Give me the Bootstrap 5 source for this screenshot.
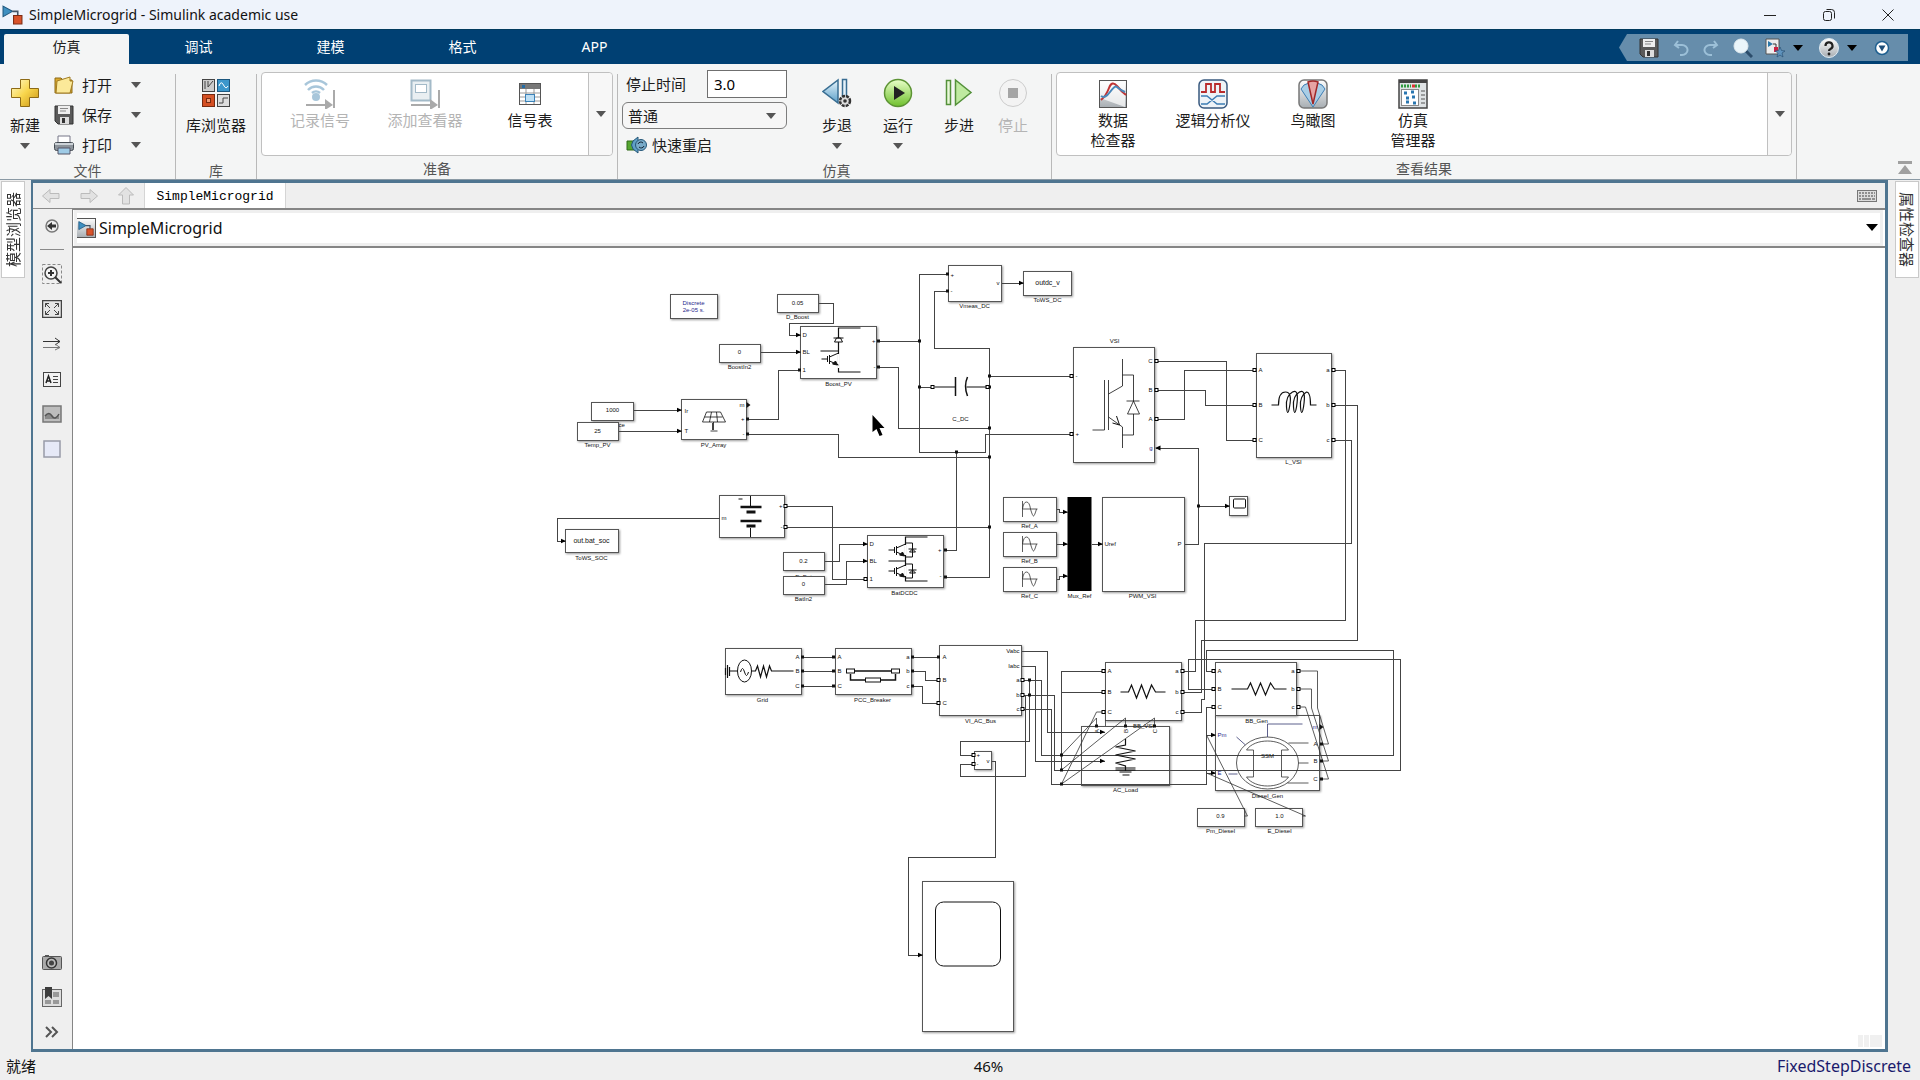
<!DOCTYPE html>
<html lang="zh-CN">
<head>
<meta charset="utf-8">
<meta name="viewport" content="width=device-width, initial-scale=1">
<title>SimpleMicrogrid - Simulink academic use</title>
<link href="https://cdn.jsdelivr.net/npm/bootstrap@5.3.0/dist/css/bootstrap.min.css" rel="stylesheet">
<style>
body{font-family:"Noto Sans","Noto Sans CJK SC",sans-serif;font-size:15px;line-height:20px;color:#1c1c1c;background:#efefef;overflow:hidden}
button{font:inherit;color:inherit;background:none;border:0;padding:0}
svg{display:block;flex-shrink:0}
.titlebar{height:29px;background:#eef3fb;padding:0 25px 0 2px;gap:6px}
.titlebar h1{font-size:14px;line-height:20px;margin:0;font-weight:400;color:#111}
.win-btns{gap:45px}
.tabbar{height:35px;background:#004073;padding:4px 12px 0 4px;border-top:1px solid #013a5e}
.rtabs{gap:7px}
.rtab{width:125px;height:30px;font-size:14px;color:#fff;padding-bottom:4px}
.rtab.active{background:#f4f5f5;color:#222;border-radius:2px 2px 0 0}
.quick{height:27px;background:#668dab;padding:0 17px 0 20px;clip-path:polygon(8px 0,100% 0,100% 100%,8px 100%,0 50%)}
.quick-main{gap:14px}
.ribbon{height:116px;background:#f4f5f5;border-bottom:1px solid #8b9aa5}
.group{margin-top:10px;border-right:1px solid #b9b9b9;height:105px}
.group-body{height:89px}
.group-name{font-size:14px;line-height:16px;color:#555;text-align:center}
.g-file{width:176px}.g-lib{width:81px}.g-prep{width:361px}.g-sim{width:434px}.g-res{width:745px}
.big{padding-top:4px;display:flex;flex-direction:column;align-items:center}
.big .pic{height:32px;margin-bottom:5px;display:flex;align-items:flex-start}
.caret{display:block;width:0;height:0;border:5px solid transparent;border-top:6px solid #555;border-bottom:0}
.caret-k{border-top-color:#000}
.caret-lg{border-width:7px 6px 0}
.rows3{margin:-4px 0 0 13px}
.row3{height:30px;gap:7px;display:flex;align-items:center}
.row3 .more{margin-left:12px}
.new-btn{margin-left:10px}
.gallery{background:#fff;border:1px solid #c0c0c0;border-radius:4px;height:84px;margin-top:-2px}
.gallery .item{display:flex;flex-direction:column;align-items:center;padding-top:5px;white-space:nowrap;width:105px}
.gallery .item .pic{height:32px;display:flex;align-items:center}
.gallery .res{padding-left:6px}
.gallery .res .item{width:100px}
.gal-more{width:24px;border-left:1px solid #c0c0c0;background:#f7f7f7;border-radius:0 4px 4px 0}
.dim{color:#b4b4b4}
.sim-col{width:165px}
.sim-first{margin-top:-4px}
.sim-in{width:80px;height:28px;border:1px solid #6f6f6f;padding:0 6px;font-size:15px;border-radius:0}
.sim-sel{height:27px;border:1px solid #7d7d7d;border-radius:6px;padding:0 28px 0 5px;font-size:15px;line-height:20px;color:#1c1c1c;background-color:#f6f6f6;background-size:10px 6px;background-position:right 10px center;background-image:url("data:image/svg+xml,%3csvg xmlns='http://www.w3.org/2000/svg' viewBox='0 0 10 6'%3e%3cpath d='M0 0h10L5 6z' fill='%23555'/%3e%3c/svg%3e")}
.restart{margin-top:6px}
.run-btns{margin-left:35px;gap:31px}
.main-row{min-height:0}
.rail{width:31px;padding:1px 0 0 1px}
.rail-r{width:32px;padding-left:7px}
.vtab{width:24px;height:97px;background:#fff;border:1px solid #c9c9c9;writing-mode:vertical-rl;text-orientation:sideways;display:flex;align-items:center;justify-content:center;color:#333}
.vtab-l{transform:rotate(180deg)}
.frame{border:3px solid #4f7590;border-left-width:2px}
.doc-tabs{height:25px;background:#efefef;padding:0 8px}
.doc-nav{width:103px;gap:18px}
.doc-tab{font-family:"Liberation Mono","Noto Sans CJK SC",monospace;font-size:13px;width:142px;height:25px;background:#fff;color:#000;border-left:1px solid #d5d5d5;border-right:1px solid #d5d5d5;padding-top:2px}
.palette{width:39px;background:#efefef;border-top:1px solid #8a8a8a;padding:7px 2px 7px 0}
.palette button{height:20px;width:22px;display:flex;align-items:center;justify-content:center}
.palette hr{width:24px;margin:13px 0 14px;border-color:#8a8a8a;opacity:1}
.palette .stack{gap:15px}
.address{height:40px;background:#fff;border:solid #858585;border-width:2px 0 2px 1px;outline:3px solid #efefef;outline-offset:-5px;padding:0 7px 1px 3px;gap:3px}
.address span{font-size:16px;color:#111}
.stage{border-left:1px solid #858585;background:#fff;position:relative}
.grip{position:absolute;right:3px;bottom:2px;width:24px;height:12px;background:linear-gradient(90deg,#f0f0f0 5px,#fff 5px 6px,#f0f0f0 6px 11px,#fff 11px 12px,#f0f0f0 12px)}
.statusbar{height:28px;padding:0 9px 0 6px;color:#111}
.statusbar .zoom{padding-left:60px}
.statusbar a{color:#1a1a6c;text-decoration:none;font-size:16px}
.dia{font-family:"Liberation Sans",Arial,sans-serif;font-size:6px;fill:#111}
.dia .w{fill:none;stroke:#444;stroke-width:1;shape-rendering:crispEdges}
.dia .d{fill:none;stroke:#333;stroke-width:.8}
.dia .b{fill:#fff;stroke:#555;stroke-width:1;shape-rendering:crispEdges;filter:drop-shadow(1px 1px 1px rgba(0,0,0,.4))}
.dia .i{fill:none;stroke:#111;stroke-width:1}
.dia .n{fill:none;stroke:#33376f;stroke-width:.8}
.dia .m{text-anchor:middle}
.dia .e{text-anchor:end}
.dia .v{font-size:7px}
.dia .u{fill:#27278a}
</style>
<script defer src="https://cdn.jsdelivr.net/npm/bootstrap@5.3.0/dist/js/bootstrap.bundle.min.js"></script>
</head>
<body class="d-flex flex-column vh-100">
<svg width="0" height="0" class="position-absolute" aria-hidden="true">
<defs>
<linearGradient id="gold" x2="1" y2="1"><stop stop-color="#fffbd0"/><stop offset=".5" stop-color="#f8d64c"/><stop offset="1" stop-color="#c99212"/></linearGradient>
<linearGradient id="steel" x2="0" y2="1"><stop stop-color="#fdfdfd"/><stop offset="1" stop-color="#a7adb2"/></linearGradient>
<linearGradient id="blue" x2="0" y2="1"><stop stop-color="#e6f4fb"/><stop offset="1" stop-color="#5b9fc9"/></linearGradient>
<linearGradient id="green" x2="0" y2="1"><stop stop-color="#e9ffc9"/><stop offset="1" stop-color="#6ec02c"/></linearGradient>
<symbol id="floppy" viewBox="0 0 20 20"><path d="M1 1h18v18H4l-3-3z" fill="#5a5a5a" stroke="#333"/><path d="M4 1h12v8H4z" fill="#eee"/><path d="M6 3.500h8M6 6h6" stroke="#888"/><path d="M6 12h9v7H6z" fill="#ddd"/><path d="M8 13h3v5H8z" fill="#333"/></symbol>
<symbol id="simlogo" viewBox="0 0 20 20"><path d="M1 2l9 5-9 5z" fill="#3e8fc0" stroke="#1d567d"/><path d="M10 7h5v4" fill="none" stroke="#456" stroke-width="1.500"/><path d="M11 11h8v8h-8z" fill="#d9532a" stroke="#7d2a12"/></symbol>
</defs></svg>

<header class="titlebar d-flex align-items-center">
<svg width="21" height="21" viewBox="0 0 20 20"><use href="#simlogo"/></svg>
<h1>SimpleMicrogrid - Simulink academic use</h1>
<div class="win-btns d-flex ms-auto">
<button type="button" aria-label="Minimize"><svg width="14" height="14"><path d="M1 7.500h12" stroke="#222"/></svg></button>
<button type="button" aria-label="Restore"><svg width="14" height="14" fill="none" stroke="#222"><rect x="1.500" y="3.500" width="8" height="9" rx="2"/><path d="M4.500 1.500h5a3 3 0 0 1 3 3v6"/></svg></button>
<button type="button" aria-label="Close"><svg width="14" height="14"><path d="M1.500 1.500l11 11M12.500 1.500l-11 11" stroke="#222"/></svg></button>
</div>
</header>

<nav class="tabbar d-flex">
<div class="rtabs d-flex">
<button type="button" class="rtab active">仿真</button><button type="button" class="rtab">调试</button><button type="button" class="rtab">建模</button><button type="button" class="rtab">格式</button><button type="button" class="rtab">APP</button>
</div>
<div class="quick d-flex align-items-center ms-auto">
<div class="quick-main d-flex align-items-center">
<button type="button" aria-label="保存"><svg width="20" height="20"><use href="#floppy"/></svg></button>
<button type="button" aria-label="撤销" disabled><svg width="16" height="18" fill="none" stroke="#9cc0d8" stroke-width="2"><path d="M5 2L2 6l4 3M2 6h7a5 4.500 0 0 1 0 10H7"/></svg></button>
<button type="button" aria-label="重做" disabled><svg width="16" height="18" fill="none" stroke="#9cc0d8" stroke-width="2"><path d="M11 2l3 4-4 3M14 6H7a5 4.500 0 0 0 0 10h2"/></svg></button>
<button type="button" aria-label="查找"><svg width="20" height="20"><path d="M12 12l7 7" stroke="#2c4d6b" stroke-width="3"/><circle cx="8" cy="8" r="7" fill="#eaf5fa" stroke="#dfe9ee"/></svg></button>
</div>
<button type="button" class="ms-2 ps-1 d-flex align-items-center" aria-label="收藏"><svg width="20" height="20"><path d="M1 1h13v15H1z" fill="#eee" stroke="#555"/><path d="M3 3l5 3-5 3z" fill="#2c78a8"/><path d="M8 6h3v3" fill="none" stroke="#333"/><path d="M9 9h4v5H9z" fill="#c24"/><path d="M15 9l1.500 3.500 3.500.5-3 2 1 4-3-2-3 2 1-4-3-2 3.500-.5z" fill="#5f93bd" stroke="#24496b" stroke-width=".6"/></svg><span class="caret caret-k ms-2"></span></button>
<button type="button" class="ms-3 d-flex align-items-center" aria-label="帮助"><svg width="20" height="20"><circle cx="10" cy="10" r="9.500" fill="url(#steel)" stroke="#dfeaf2"/><path d="M6.500 8a3.500 3.500 0 1 1 5 3q-1.500.7-1.500 2" fill="none" stroke="#222" stroke-width="2.200"/><circle cx="10" cy="16" r="1.400" fill="#222"/></svg><span class="caret caret-k ms-2"></span></button>
<button type="button" class="ms-3" aria-label="自定义"><svg width="18" height="18"><circle cx="9" cy="9" r="6.500" fill="#fff" stroke="#1f5f8f" stroke-width="1.500"/><path d="M5.500 6.500h7L9 12.500z" fill="#1f4e78"/></svg></button>
</div>
</nav>

<section class="ribbon d-flex">
<div class="group g-file">
<div class="group-body d-flex">
<button type="button" class="big new-btn"><span class="pic"><svg width="30" height="30"><path d="M10.500 1.500h9v9h9v9h-9v9h-9v-9h-9v-9h9z" fill="url(#gold)" stroke="#8d6a16"/></svg></span>新建<span class="caret mt-2"></span></button>
<div class="rows3">
<div class="row3"><svg width="22" height="20"><path d="M2 3h6l2 2h9v13H2z" fill="#dba92d" stroke="#8d6a16"/><path d="M4 6l13-4v4h3l-3 12H3z" fill="#fbe999" stroke="#a27c22"/></svg><button type="button">打开</button><button type="button" class="more" aria-label="打开选项"><span class="caret"></span></button></div>
<div class="row3"><svg width="22" height="20"><use href="#floppy"/></svg><button type="button">保存</button><button type="button" class="more" aria-label="保存选项"><span class="caret"></span></button></div>
<div class="row3"><svg width="22" height="20"><path d="M5 1h12v8H5z" fill="#fff" stroke="#778"/><rect x="1.500" y="7.500" width="19" height="8" rx="2" fill="#8d949b" stroke="#444b52"/><path d="M2 9h18" stroke="#cdd3d8" stroke-width="2"/><path d="M5 13h12v6H5z" fill="#9fcbe6" stroke="#556"/></svg><button type="button">打印</button><button type="button" class="more" aria-label="打印选项"><span class="caret"></span></button></div>
</div>
</div>
<div class="group-name">文件</div>
</div>
<div class="group g-lib">
<div class="group-body d-flex justify-content-center">
<button type="button" class="big"><span class="pic"><svg width="30" height="30"><rect x="1.500" y="1.500" width="12" height="12" fill="#ccc" stroke="#444"/><path d="M4 3v8M7 3v6l5-6" stroke="#444" fill="none"/><rect x="16.500" y="1.500" width="12" height="12" fill="#3c97cc" stroke="#1b567e"/><path d="M18 8q2-6 4.500-1t4.500 1" stroke="#fff" fill="none"/><rect x="1.500" y="16.500" width="12" height="12" fill="#d44f22" stroke="#772a10"/><rect x="5.500" y="20.500" width="4" height="4" fill="#f29a75" stroke="#772a10"/><rect x="16.500" y="16.500" width="12" height="12" fill="#ddd" stroke="#444"/><path d="M18 25h4v-5h5" stroke="#444" fill="none"/></svg></span>库浏览器</button>
</div>
<div class="group-name">库</div>
</div>
<div class="group g-prep px-1">
<div class="group-body">
<div class="gallery d-flex">
<div class="d-flex flex-grow-1 justify-content-center">
<button type="button" class="item dim" disabled><span class="pic"><svg width="32" height="30" fill="none"><circle cx="12" cy="18" r="4" fill="#a8c6da"/><path d="M4 11a11 11 0 0 1 16 0M1 6a16 16 0 0 1 22 0M8 14a6 6 0 0 1 8 0" stroke="#a8c6da" stroke-width="2.500"/><path d="M2 26h20M30 11v18" stroke="#aaa" stroke-width="2"/><path d="M21 20l8 6-8 5z" fill="#aaa"/></svg></span>记录信号</button>
<button type="button" class="item dim" disabled><span class="pic"><svg width="32" height="30" fill="none"><rect x="2.500" y="1.500" width="19" height="20" fill="#e9eff2" stroke="#a3bac8" stroke-width="2"/><rect x="6.500" y="5.500" width="11" height="8" fill="#fff" stroke="#a3bac8"/><path d="M2 26h20M30 11v18" stroke="#aaa" stroke-width="2"/><path d="M21 20l8 6-8 5z" fill="#aaa"/></svg></span>添加查看器</button>
<button type="button" class="item"><span class="pic"><svg width="22" height="24"><rect x=".5" y="1.500" width="21" height="21" fill="#fff" stroke="#555"/><path d="M1 2h20v5H1z" fill="#777"/><path d="M3 3h3v3H3z" fill="#236ca5"/><path d="M1 11h20M1 15h20M1 19h20M7 7v15M15 7v15" stroke="#999"/><rect x="6.500" y="12.500" width="9" height="7" fill="#bfe0f5" stroke="#3b82b8"/></svg></span>信号表</button>
</div>
<button type="button" class="gal-more d-flex align-items-center justify-content-center" aria-label="更多"><span class="caret"></span></button>
</div>
</div>
<div class="group-name">准备</div>
</div>
<div class="group g-sim ps-1">
<div class="group-body d-flex">
<div class="sim-col">
<div class="sim-first d-flex justify-content-between align-items-center"><label for="stop" class="ps-1">停止时间</label><input id="stop" class="sim-in" value="3.0"></div>
<select class="form-select sim-sel mt-1" aria-label="仿真模式"><option>普通</option></select>
<button type="button" class="restart d-flex align-items-center ps-1 w-100"><svg width="22" height="18" class="me-1"><path d="M1 5h8v9H1z" fill="#55a630" stroke="#2e6b18"/><path d="M12 1v3a6 6 0 0 1 0 10v3l-5-4q-3-4 0-8z" fill="#5f9fc6" stroke="#245678"/><circle cx="15" cy="9" r="5.500" fill="#78abc9" stroke="#245678"/><path d="M12 8a3 3 0 0 1 5-1M18 10a3 3 0 0 1-5 1" stroke="#123" fill="none"/></svg>快速重启</button>
</div>
<div class="run-btns d-flex">
<button type="button" class="big"><span class="pic"><svg width="30" height="30"><path d="M16 2v23L1 13.500z" fill="url(#blue)" stroke="#386d92" stroke-width="1.500"/><path d="M20.500 1.500h4v23h-4z" fill="#e5f2fa" stroke="#386d92" stroke-width="1.500"/><circle cx="23" cy="23" r="5" fill="#ddd" stroke="#333" stroke-width="2.500" stroke-dasharray="3 1"/><circle cx="23" cy="23" r="1.800" fill="#333"/></svg></span>步退<span class="caret mt-2"></span></button>
<button type="button" class="big"><span class="pic"><svg width="30" height="30"><circle cx="15" cy="15" r="13.500" fill="url(#green)" stroke="#5c9334" stroke-width="1.500"/><path d="M11 8l11 7-11 7z" fill="#222"/></svg></span>运行<span class="caret mt-2"></span></button>
<button type="button" class="big"><span class="pic"><svg width="28" height="30"><path d="M1.500 2.500h4v24h-4z" fill="#e8f8d9" stroke="#54913a" stroke-width="1.500"/><path d="M10.500 2v25L26 14.500z" fill="#bfeaa0" stroke="#54913a" stroke-width="1.500"/></svg></span>步进</button>
</div>
<button type="button" class="big dim ms-4" disabled><span class="pic"><svg width="30" height="30"><circle cx="15" cy="15" r="13.500" fill="#f3f3f3" stroke="#ccc"/><path d="M10 10h10v10H10z" fill="#a5a5a5"/></svg></span>停止</button>
</div>
<div class="group-name">仿真</div>
</div>
<div class="group g-res px-1">
<div class="group-body">
<div class="gallery d-flex">
<div class="res d-flex flex-grow-1">
<button type="button" class="item"><span class="pic"><svg width="28" height="28"><rect x=".5" y=".5" width="27" height="27" fill="url(#steel)" stroke="#555"/><path d="M1 2v16l25 9V1z" fill="#fff" opacity=".7"/><path d="M2 20q5-4 8-12t8-2 9 9" fill="none" stroke="#c13434" stroke-width="2"/><path d="M2 16q4 3 9-4t7-5 8 5" fill="none" stroke="#4a87b9" stroke-width="2"/></svg></span><span>数据<br>检查器</span></button>
<button type="button" class="item"><span class="pic"><svg width="30" height="30"><rect x="1" y="1" width="28" height="28" rx="5" fill="#eef3f7" stroke="#38597f" stroke-width="1.500"/><path d="M3 13h5V5h5v8h4V5h5v8h5" fill="none" stroke="#b92b2b" stroke-width="1.800"/><path d="M3 17h6l10 8h8M3 25h6l10-8h8" fill="none" stroke="#3d7db4" stroke-width="1.500"/></svg></span>逻辑分析仪</button>
<button type="button" class="item"><span class="pic"><svg width="30" height="30"><rect x="1" y="1" width="28" height="28" rx="5" fill="url(#steel)" stroke="#777" stroke-width="1.500"/><path d="M15 28L3 10q2-5 8-6h8q6 1 8 6z" fill="#a9cee6" stroke="#3d7db4"/><path d="M15 25L10 3q5-2 10 0z" fill="#e6a3a3" stroke="#a02828" stroke-width="1.500"/></svg></span>鸟瞰图</button>
<button type="button" class="item"><span class="pic"><svg width="30" height="30"><rect x="1" y="1" width="28" height="28" fill="#dfe3e5" stroke="#444" stroke-width="1.500"/><path d="M1 1h28v3H1z" fill="#444"/><path d="M3 7h10m4 0h6" stroke="#2f9a3f" stroke-width="3" stroke-dasharray="2 1"/><path d="M14 7h3" stroke="#d33" stroke-width="3"/><rect x="3.500" y="10.500" width="17" height="16" fill="#fff" stroke="#888"/><path d="M6 14h3m4-1h3m-8 6h3m3-1h3m-9 5h3m4 1h3" stroke="#2a77b0" stroke-width="3"/><path d="M23 12h4m-4 4h4m-4 4h4m-4 4h4" stroke="#555"/></svg></span><span>仿真<br>管理器</span></button>
</div>
<button type="button" class="gal-more d-flex align-items-center justify-content-center" aria-label="更多"><span class="caret"></span></button>
</div>
</div>
<div class="group-name">查看结果</div>
</div>
<button type="button" class="ms-auto align-self-end me-2 mb-1" aria-label="折叠工具条"><svg width="14" height="14" fill="#a0a0a0"><path d="M0 0h14v3H0zM7 4l7 9H0z"/></svg></button>
</section>

<main class="main-row d-flex flex-grow-1">
<aside class="rail"><button type="button" class="vtab vtab-l">模型浏览器</button></aside>
<div class="frame d-flex flex-column flex-grow-1">
<div class="doc-tabs d-flex align-items-center">
<div class="doc-nav d-flex">
<svg width="20" height="20" fill="#e2e2e2" stroke="#bbb"><path d="M1.500 10L9 3.500v4h9v5H9v4z"/></svg>
<svg width="20" height="20" fill="#e2e2e2" stroke="#bbb"><path d="M18.500 10L11 3.500v4H2v5h9v4z"/></svg>
<svg width="18" height="20" fill="#e2e2e2" stroke="#bbb"><path d="M9 1.500L1.500 9h4v9h7V9h4z"/></svg>
</div>
<button type="button" class="doc-tab">SimpleMicrogrid</button>
<svg width="20" height="12" class="ms-auto"><rect x=".5" y=".5" width="19" height="11" fill="#ddd" stroke="#777"/><path d="M2 3h16M2 6h16" stroke="#777" stroke-width="1.500" stroke-dasharray="2 1"/><path d="M2 9h2m1 0h9m1 0h3" stroke="#777" stroke-width="1.500"/></svg>
</div>
<div class="main-row d-flex flex-grow-1">
<div class="palette d-flex flex-column align-items-center">
<button type="button" aria-label="隐藏浏览器"><svg width="16" height="16"><circle cx="8" cy="8" r="6" fill="#eee" stroke="#777" stroke-width="1.500"/><path d="M3 8l5-4v2.500h4v3H8V12z" fill="#333"/></svg></button>
<hr>
<div class="stack d-flex flex-column">
<button type="button" aria-label="缩放"><svg width="20" height="20" fill="none"><rect x=".5" y=".5" width="19" height="19" stroke="#888" stroke-dasharray="3 2"/><circle cx="9" cy="9" r="6" fill="#f6f6f6" stroke="#444" stroke-width="1.500"/><path d="M6 9h6M9 6v6M13 13l6 6" stroke="#333" stroke-width="2"/></svg></button>
<button type="button" aria-label="适应视图"><svg width="20" height="18" fill="none" stroke="#444"><rect x=".5" y=".5" width="19" height="17" fill="#e6e6e6" stroke-width="1.500"/><path d="M3.500 7V3.500H7M3.500 3.500L8 8M13 3.500h3.500V7M16.500 3.500L12 8M3.500 11v3.500H7M3.500 14.500L8 10M13 14.500h3.500V11M16.500 14.500L12 10"/></svg></button>
<button type="button" aria-label="采样时间"><svg width="20" height="14" fill="none"><path d="M1 4.500h17M13 1l5 3.500L13 8" stroke="#333"/><path d="M1 10.500h17M13 7l5 3.500L13 13" stroke="#777"/></svg></button>
<button type="button" aria-label="注释"><svg width="18" height="15"><rect x=".5" y=".5" width="17" height="14" fill="#f2f2f2" stroke="#444"/><path d="M3 11l2.500-7L8 11M4 9h3" fill="none" stroke="#222" stroke-width="1.500"/><path d="M10 4.500h5M10 7.500h5M10 10.500h5" stroke="#444"/></svg></button>
<button type="button" aria-label="图像"><svg width="20" height="18"><rect x="1" y="1" width="18" height="16" fill="#bdbdbd" stroke="#777" stroke-width="1.500"/><path d="M3 14v-3q4-5 7 0t7-2v5z" fill="#8a8a8a"/><path d="M3 11q4-5 7 0t7-2" fill="none" stroke="#555" stroke-width="1.500"/></svg></button>
<button type="button" aria-label="区域"><svg width="18" height="18"><rect x="1" y="1" width="16" height="16" fill="#e6e9f7" stroke="#989ba8" stroke-width="1.500"/></svg></button>
</div>
<div class="stack d-flex flex-column mt-auto">
<button type="button" aria-label="截图"><svg width="20" height="16"><rect x=".5" y="2.500" width="19" height="13" rx="1" fill="#aaa" stroke="#555"/><path d="M3 1h4v2H3z" fill="#555"/><circle cx="9.500" cy="9" r="5" fill="#bbb" stroke="#333" stroke-width="1.500"/><circle cx="9.500" cy="9" r="2.500" fill="#444"/></svg></button>
<button type="button" aria-label="书签"><svg width="20" height="20"><rect x=".5" y="2.500" width="19" height="17" fill="#ddd" stroke="#666"/><path d="M11 5h6v5h-6zM3 13h6v4H3zM11 13h6v4h-6z" fill="#999"/><path d="M3 0h7v12L6.500 9 3 12z" fill="#3c3c3c"/></svg></button>
<button type="button" aria-label="更多"><svg width="14" height="14" fill="none" stroke="#555" stroke-width="2"><path d="M1 2l5 5-5 5M7 2l5 5-5 5"/></svg></button>
</div>
</div>
<div class="d-flex flex-column flex-grow-1">
<div class="address d-flex align-items-center">
<svg width="20" height="20"><rect x=".5" y=".5" width="19" height="19" fill="url(#steel)" stroke="#555"/><svg x="2" y="2" width="16" height="16" viewBox="0 0 20 20"><use href="#simlogo"/></svg></svg>
<span>SimpleMicrogrid</span>
<button type="button" class="ms-auto" aria-label="路径"><span class="caret caret-k caret-lg"></span></button>
</div>
<div class="stage flex-grow-1">
<svg class="dia position-absolute w-100 h-100" viewBox="73 248 1811 801">
<defs>
<marker id="ah" markerUnits="userSpaceOnUse" markerWidth="6" markerHeight="6" refX="5" refY="3" orient="auto"><path d="M0 .5L5.500 3 0 5.500z" fill="#000"/></marker>
<g id="dot"><rect x="-1.500" y="-1.500" width="3" height="3"/></g>
<g id="port"><rect x="-1.500" y="-1.500" width="3" height="3" fill="#fff" stroke="#000"/></g>
<g id="sine"><path d="M-5-8V8M-5 0Q-4-7-1-7T3 0Q5 7 6 7T9 0M-5 0H10" fill="none" stroke="#333" stroke-width=".8"/></g>
<g id="igbt" fill="none" stroke="#111"><path d="M-17 0h6M-11-3v6M-9-4v9M-9-2L0-6M-9 2L0 6"/><path d="M-1 6l-5-1 3-3z" fill="#111"/></g>
</defs>
<g>
<rect class="b" x="670" y="294" width="47" height="24"/><rect class="b" x="777" y="294" width="41" height="18"/><rect class="b" x="719" y="344" width="41" height="18"/><rect class="b" x="800" y="326" width="76" height="52"/><rect class="b" x="681" y="399" width="65" height="40"/><rect class="b" x="591" y="402" width="42" height="18"/>
<text x="618" y="427">ce</text><rect class="b" x="577" y="422" width="41" height="18"/>
<rect class="b" x="948" y="265" width="53" height="36"/><rect class="b" x="1023" y="271" width="48" height="24"/><rect class="b" x="1073" y="347" width="81" height="115"/><rect class="b" x="1256" y="353" width="75" height="104"/>
<rect class="b" x="719" y="495" width="65" height="42"/><rect class="b" x="565" y="529" width="53" height="23"/><rect class="b" x="783" y="552" width="41" height="18"/><text class="m" x="803" y="579">D_Bat</text><rect class="b" x="783" y="576" width="41" height="18"/><rect class="b" x="867" y="535" width="76" height="52"/>
<rect class="b" x="725" y="648" width="76" height="46"/><rect class="b" x="835" y="648" width="76" height="46"/><rect class="b" x="939" y="645" width="82" height="70"/>
<rect class="b" x="1003" y="497" width="53" height="24"/><rect class="b" x="1003" y="532" width="53" height="24"/><rect class="b" x="1003" y="567" width="53" height="24"/><rect x="1067" y="497" width="24" height="94" fill="#000"/><rect class="b" x="1102" y="497" width="82" height="94"/><rect class="b" x="1229" y="496" width="18" height="19"/>
<rect class="b" x="1081" y="726" width="88" height="59"/><rect class="b" x="1105" y="662" width="76" height="58"/><rect class="b" x="1215" y="715" width="104" height="75"/><rect class="b" x="1215" y="662" width="81" height="53"/>
<rect class="b" x="1197" y="808" width="47" height="18"/><rect class="b" x="1255" y="808" width="47" height="18"/><rect class="b" x="974" y="751" width="17" height="18"/><rect class="b" x="922" y="881" width="91" height="150"/>
</g>
<g class="w">
<g marker-end="url(#ah)"><path d="M818 303H833V323H789V335H800"/><path d="M760 352H800"/><path d="M633 410H681"/><path d="M618 431H681"/><path d="M1001 283H1023"/><path d="M1197 506H1229"/><path d="M1198 448H1155"/><path d="M719 518H557V541H565"/><path d="M824 561H839V544H867"/><path d="M824 584H846V561H867"/><path d="M1056 509H1059V512H1067"/><path d="M1056 544H1067"/><path d="M1056 579H1059V576H1067"/><path d="M1091 544H1102"/><path d="M1021 651H1047V732H1104"/><path d="M1021 666H1035V761H1104"/><path d="M991 761H995V857H908V955H922"/><path d="M1206 735H1215"/><path d="M1206 773H1215"/></g>
<path d="M747 419H778V370H799M747 434H838V457H989M877 341H919M947 274H919V452H985V434H1072M956 452V550H944M877 367H898V428H989M919 387H932M947 291H934V348H989V577H944M989 376H1072M1156 361H1226V440H1254M1156 390H1205V405H1254M1156 419H1184V370H1254M1198 448V544H1184M1333 370H1345V620H1195V671H1182M1333 405H1357V640H1201V692H1182M1333 440H1351V543H1204V699H1201V712H1182M785 506H832V579H865M785 527H989M801 657H835M801 671H835M801 686H835M911 657H939M911 671H925V680H939M911 686H922V703H939"/>
<path d="M1213 671H1206V650H1393V755H1041V680H1022M1213 689H1188V659H1400V770H1054V695H1022M1213 707H1206V784H1051V709H1022M1029 680V741H960V755H973M1025 695V776H960V764H973M1103 671H1061V770M1103 692H1061"/>
</g>
<g class="d"><path d="M1103 712h-7L1061 784M1061 755l35-37v8M1061 770l64-52v8M1061 784l93-66v8M1298 671h19v37l11 36h-7M1298 689h13v19l17 53h-7M1298 707h7l23 72h-7M1206 735l41 81h-3M1206 773l99 43h-3M1105 720v6"/></g>
<g><use href="#dot" x="919" y="341"/><use href="#dot" x="919" y="387"/><use href="#dot" x="956" y="452"/><use href="#dot" x="989" y="376"/><use href="#dot" x="989" y="387"/><use href="#dot" x="989" y="428"/><use href="#dot" x="989" y="457"/><use href="#dot" x="989" y="527"/><use href="#dot" x="1198" y="506"/><use href="#dot" x="1029" y="680"/><use href="#dot" x="1029" y="695"/><use href="#dot" x="1061" y="755"/><use href="#dot" x="1061" y="770"/><use href="#dot" x="1061" y="784"/>
<use href="#dot" x="878" y="341"/><use href="#dot" x="878" y="367"/><use href="#dot" x="799" y="370"/><use href="#dot" x="747" y="419"/><use href="#dot" x="747" y="434"/><use href="#dot" x="947" y="274"/><use href="#dot" x="947" y="291"/><use href="#dot" x="945" y="550"/><use href="#dot" x="945" y="577"/><path d="M746 402l4 3-4 3zM1319 724l4 3-4 3z"/></g>
<g><use href="#port" x="932" y="387"/><use href="#port" x="987" y="387"/><use href="#port" x="1071" y="376"/><use href="#port" x="1071" y="434"/><use href="#port" x="1156" y="361"/><use href="#port" x="1156" y="390"/><use href="#port" x="1156" y="419"/><use href="#port" x="1254" y="370"/><use href="#port" x="1254" y="405"/><use href="#port" x="1254" y="440"/><use href="#port" x="1333" y="370"/><use href="#port" x="1333" y="405"/><use href="#port" x="1333" y="440"/><use href="#port" x="785" y="506"/><use href="#port" x="785" y="527"/><use href="#port" x="865" y="579"/>
<use href="#dot" x="802" y="657"/><use href="#dot" x="802" y="671"/><use href="#dot" x="802" y="686"/><use href="#dot" x="833" y="657"/><use href="#dot" x="833" y="671"/><use href="#dot" x="833" y="686"/><use href="#dot" x="912" y="657"/><use href="#dot" x="912" y="671"/><use href="#dot" x="912" y="686"/><use href="#dot" x="938" y="657"/><use href="#port" x="938" y="680"/><use href="#port" x="938" y="703"/><use href="#port" x="1022" y="680"/><use href="#port" x="1022" y="695"/><use href="#port" x="1022" y="709"/>
<use href="#port" x="1103" y="671"/><use href="#port" x="1103" y="692"/><use href="#port" x="1103" y="712"/><use href="#port" x="1182" y="671"/><use href="#port" x="1182" y="692"/><use href="#port" x="1182" y="712"/><use href="#port" x="1213" y="671"/><use href="#port" x="1213" y="689"/><use href="#port" x="1213" y="707"/><use href="#port" x="1298" y="671"/><use href="#port" x="1298" y="689"/><use href="#port" x="1298" y="707"/><use href="#port" x="973" y="755"/><use href="#port" x="973" y="764"/><use href="#dot" x="1096" y="726"/><use href="#dot" x="1125" y="726"/><use href="#dot" x="1154" y="726"/><use href="#dot" x="1321" y="744"/><use href="#dot" x="1321" y="761"/><use href="#dot" x="1321" y="779"/></g>
<g class="i">
<path d="M860 328h-22v44h22M820 351h18" stroke-width="1.200"/><path d="M834 342h8l-2-4h-4zM833 338h10" fill="#fff"/>
<path d="M838 354v14" stroke="#fff" stroke-width="2"/><use href="#igbt" x="838" y="359"/>
<path d="M706 412h14l5 10h-23zM704 417h18M711 412l-2 10M716 412l1 10M713 422v8M710 431h7M712 423v7" stroke-width=".8"/>
<path d="M934 387h21M966 387h20" stroke-width="1.200"/><path d="M955 377v19M967 377q-4 9 0 19" stroke-width="1.500"/>
<path d="M1122 359v27l-14 8M1108 380v50M1104 380v50h-12M1108 417l14 10v21M1122 375h11v26M1133 414v21h-11M1126 401h13M1133 401l-6 13h12z" stroke-width=".8"/><path d="M1116 416l3 9-7-2"/>
<path d="M1271 405h7q0-13 7-13t4 15q-2 11-3 0t6-15 4 15q-2 11-3 0t6-15 4 15q-2 11-3 0t6-15q4 0 4 13h6" stroke-width="1.200"/>
<path d="M750 496v10M750 528v9M738 499h4"/><path d="M740 507h21M740 521h21" stroke-width="2.500"/><path d="M746 512h9M746 526h9" stroke-width="3"/>
<path d="M927 537h-22v44h22M888 561h17" stroke-width="1.200"/><path d="M905 545v10M905 566v10" stroke="#fff" stroke-width="2"/><use href="#igbt" x="905" y="550"/><use href="#igbt" x="905" y="571"/><path d="M905 543h7v14h-7M905 564h7v14h-7M908 549h8M908 570h8M909 552h6l-3-3zM909 573h6l-3-3z"/>
<path d="M727 665v13M729 667v9M725 668v7M729 671h8M751 671h4l2-5 3 11 3-11 3 11 3-11 2 5h22" stroke-width="1.200"/><ellipse cx="744" cy="671" rx="7" ry="11"/><path d="M740 672q2-7 4 0t4 0"/>
<path d="M854 671h38M850 674v6h15M880 680h15v-6" stroke-width="1.500"/><rect x="846" y="669" width="8" height="4" fill="#fff"/><rect x="891" y="669" width="8" height="4" fill="#fff"/><rect x="865" y="678" width="15" height="4" fill="#fff"/>
<path d="M1120 692h8l3-7 5 13 5-13 5 13 5-13 4 7h10M1231 689h16l3-6 5 12 5-12 5 12 5-12 4 6h12" stroke-width="1.200"/>
<path d="M1125 739v6l-10 2 20 4-20 4 20 4-20 4 10 3v5M1115 768h20M1115 770h20M1119 772h12M1122 775h7" stroke-width="1.200"/>
<rect x="1233" y="499" width="12" height="9" rx="1"/><rect x="935" y="902" width="65" height="64" rx="8"/>
</g>
<use href="#sine" x="1027" y="509"/><use href="#sine" x="1027" y="544"/><use href="#sine" x="1027" y="579"/>
<g class="d"><ellipse cx="1267" cy="763" rx="31" ry="26"/><path d="M1246 750C1254 738 1280 738 1288 750H1281V777H1288C1280 789 1254 789 1246 777H1253V750zM1288 743h20M1298 763h10M1287 783h21"/></g>
<path class="n" d="M1302 724h-35v13M1236 737l9 8M1228 774h9"/>
<g class="m">
<text class="u" x="693" y="305">Discrete</text><text class="u" x="693" y="312">2e-05 s.</text><text x="797" y="305">0.05</text><text x="797" y="319">D_Boost</text><text x="739" y="354">0</text><text x="739" y="369">BoostIn2</text><text x="838" y="386">Boost_PV</text><text x="612" y="412">1000</text><text x="597" y="433">25</text><text x="597" y="447">Temp_PV</text><text x="713" y="447">PV_Array</text><text x="974" y="308">Vmeas_DC</text><text class="v" x="1047" y="285">outdc_v</text><text x="1047" y="302">ToWS_DC</text><text x="960" y="421">C_DC</text><text x="1114" y="343">VSI</text><text x="1293" y="464">L_VSI</text>
<text class="v" x="591" y="543">out.bat_soc</text><text x="591" y="560">ToWS_SOC</text><text x="803" y="563">0.2</text><text x="803" y="586">0</text><text x="803" y="601">BatIn2</text><text x="904" y="595">BatDCDC</text><text x="1029" y="528">Ref_A</text><text x="1029" y="563">Ref_B</text><text x="1029" y="598">Ref_C</text><text x="1079" y="598">Mux_Ref</text><text x="1142" y="598">PWM_VSI</text><text x="762" y="702">Grid</text><text x="872" y="702">PCC_Breaker</text><text x="980" y="723">VI_AC_Bus</text><text x="1143" y="728">BB_VSI</text><text x="1256" y="723">BB_Gen</text><text x="1125" y="792">AC_Load</text><text x="1267" y="798">Diesel_Gen</text><text x="1267" y="758">SSM</text><text x="1220" y="818">0.9</text><text x="1279" y="818">1.0</text><text x="1220" y="833">Pm_Diesel</text><text x="1279" y="833">E_Diesel</text>
</g>
<g><text x="802" y="337">D</text><text x="802" y="354">BL</text><text x="802" y="372">1</text><text x="684" y="413">Ir</text><text x="684" y="433">T</text><text x="950" y="277">+</text><text x="950" y="293">-</text><text x="1075" y="378">-</text><text x="1075" y="436">+</text><text x="1258" y="372">A</text><text x="1258" y="407">B</text><text x="1258" y="442">C</text><text x="721" y="520">m</text><text x="869" y="546">D</text><text x="869" y="563">BL</text><text x="869" y="581">1</text><text x="1104" y="546">Uref</text><text x="837" y="659">A</text><text x="837" y="673">B</text><text x="837" y="688">C</text><text x="942" y="659">A</text><text x="942" y="682">B</text><text x="942" y="705">C</text><text x="1107" y="673">A</text><text x="1107" y="694">B</text><text x="1107" y="714">C</text><text x="1217" y="673">A</text><text x="1217" y="691">B</text><text x="1217" y="709">C</text><text class="u" x="1217" y="737">Pm</text><text class="u" x="1217" y="775">E</text><text x="976" y="757">+</text><text x="976" y="766">-</text></g>
<g class="e"><text x="875" y="343">+</text><text x="875" y="369">-</text><text x="744" y="407">m</text><text x="744" y="421">+</text><text x="744" y="436">-</text><text x="999" y="285">v</text><text x="1152" y="363">C</text><text x="1152" y="392">B</text><text x="1152" y="421">A</text><text class="u" x="1152" y="450">g</text><text x="1329" y="372">a</text><text x="1329" y="407">b</text><text x="1329" y="442">c</text><text x="782" y="508">+</text><text x="782" y="529">-</text><text x="941" y="552">+</text><text x="941" y="578">-</text><text x="1181" y="546">P</text><text x="799" y="659">A</text><text x="799" y="673">B</text><text x="799" y="688">C</text><text x="909" y="659">a</text><text x="909" y="673">b</text><text x="909" y="688">c</text><text x="1019" y="653">Vabc</text><text x="1019" y="668">Iabc</text><text x="1019" y="682">a</text><text x="1019" y="697">b</text><text x="1019" y="711">c</text><text x="1178" y="673">a</text><text x="1178" y="694">b</text><text x="1178" y="714">c</text><text x="1294" y="673">a</text><text x="1294" y="691">b</text><text x="1294" y="709">c</text><text class="u" x="1317" y="729">m</text><text x="1317" y="746">A</text><text x="1317" y="763">B</text><text x="1317" y="781">C</text><text x="989" y="763">v</text></g>
<g class="m"><text transform="translate(1098 731) rotate(-90)">A</text><text transform="translate(1127 731) rotate(-90)">B</text><text transform="translate(1156 731) rotate(-90)">C</text></g>
<path d="M872 415v17l4-3 3 7 3-1-3-7h5z" fill="#000"/>
</svg>
<div class="grip"></div>
</div>
</div>
</div>
</div>
<aside class="rail rail-r"><button type="button" class="vtab">属性检查器</button></aside>
</main>
<footer class="statusbar row g-0 align-items-center">
<div class="col">就绪</div><div class="col-auto zoom">46%</div><div class="col text-end"><a href="#">FixedStepDiscrete</a></div>
</footer>
</body>
</html>
